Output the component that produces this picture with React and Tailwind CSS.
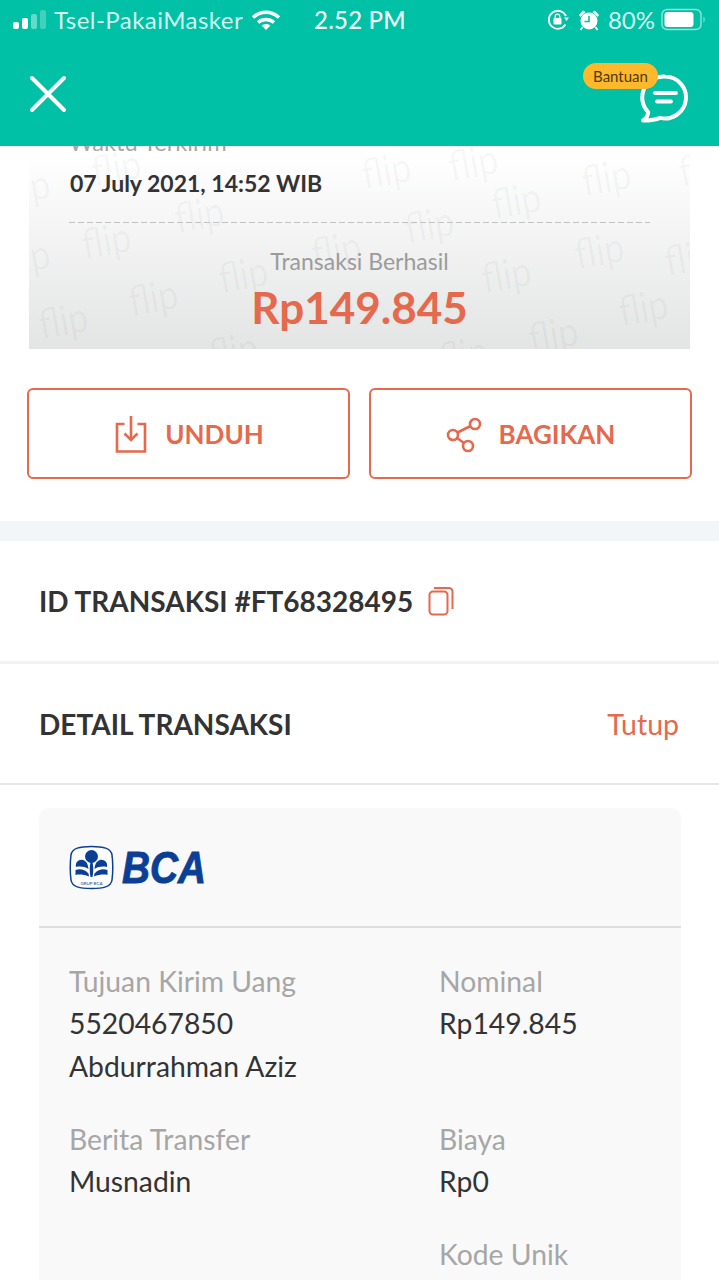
import React from 'react';

const ORANGE = '#e5694c';

// watermark placement, relative to the receipt card
const watermarks = [
  'left-[59px] top-[44px]',
  'left-[142px] top-[91px]',
  'left-[49px] top-[117px]',
  'left-[96px] top-[174px]',
  'left-[6px] top-[197px]',
  'left-[186px] top-[151px]',
  'left-[176px] top-[227px]',
  'left-[279px] top-[126px]',
  'left-[459px] top-[77px]',
  'left-[549px] top-[54px]',
  'left-[372px] top-[101px]',
  'left-[449px] top-[151px]',
  'left-[542px] top-[127px]',
  'left-[496px] top-[211px]',
  'left-[586px] top-[184px]',
  'left-[632px] top-[134px]',
  'left-[329px] top-[47px]',
  'left-[416px] top-[39px]',
  'left-[406px] top-[231px]',
  'left-[646px] top-[44px]',
  'left-[-32px] top-[64px]',
  'left-[-32px] top-[134px]',
];

const SignalBars = () => (
  <svg width="34" height="24" viewBox="0 0 34 24" className="block">
    <rect x="0" y="14" width="6" height="7" rx="2" fill="#ffffff" />
    <rect x="9" y="10" width="6" height="11" rx="2" fill="#ffffff" />
    <rect x="18" y="6" width="6" height="15" rx="2" fill="#ffffff" fillOpacity="0.4" />
    <rect x="27" y="2" width="6" height="19" rx="2" fill="#ffffff" fillOpacity="0.25" />
  </svg>
);

const Wifi = () => (
  <svg width="30" height="22" viewBox="0 0 30 22" fill="none" stroke="#ffffff" strokeWidth="3.6" className="block">
    <path d="M2 8.5C9.5 1.5 20.5 1.5 28 8.5" />
    <path d="M7 13.5C11.5 9.5 18.5 9.5 23 13.5" />
    <path d="M15 21l-4.4-4.6c2.5-2 6.3-2 8.8 0z" fill="#ffffff" stroke="none" />
  </svg>
);

const RotationLock = () => (
  <svg width="23" height="22" viewBox="0 0 23 22" fill="none" className="block">
    <path d="M18.5 15.5A9 9 0 1 1 19 7" stroke="#ffffff" strokeWidth="1.8" />
    <path d="M17 8.5h5l-2.5 3.5z" fill="#ffffff" />
    <rect x="6.5" y="9" width="8" height="6.5" rx="1" fill="#ffffff" />
    <path d="M8.2 9V7.5a2.3 2.3 0 0 1 4.6 0V9" stroke="#ffffff" strokeWidth="1.3" />
  </svg>
);

const Alarm = () => (
  <svg width="22" height="22" viewBox="0 0 22 22" className="block">
    <circle cx="11" cy="12" r="8.5" fill="#ffffff" />
    <path d="M11 7v5.5H6.5" fill="none" stroke="#00c1a6" strokeWidth="1.6" />
    <path d="M1 6l4-4.5 2.5 1.5L2.5 8zM21 6l-4-4.500-2.500 1.500L19.500 8z" fill="#ffffff" />
    <path d="M4.500 18l-2 3M17.500 18l2 3" stroke="#ffffff" strokeWidth="1.8" />
  </svg>
);

const Battery = () => (
  <svg width="45" height="24" viewBox="0 0 45 24" className="block">
    <rect x="1" y="1.500" width="39" height="20" rx="5" fill="none" stroke="#ffffff" strokeOpacity="0.55" strokeWidth="1.5" />
    <rect x="3.500" y="4" width="29" height="15" rx="3" fill="#ffffff" />
    <path d="M42.500 8.500c1.500.5 1.500 5.500 0 6z" fill="#ffffff" fillOpacity="0.6" />
  </svg>
);

const CloseIcon = () => (
  <svg width="38" height="38" viewBox="0 0 38 38" fill="none" stroke="#ffffff" strokeWidth="4" strokeLinecap="round" className="block">
    <path d="M3 3l32 32M35 3L3 35" />
  </svg>
);

const ChatIcon = () => (
  <svg width="50" height="52" viewBox="0 0 50 52" fill="none" stroke="#ffffff" strokeLinecap="round" className="block">
    <path
      d="M26 3.500a21 21 0 1 1-5 41.400c-3 1.500-8 2.600-17 2.600 3.500-2.400 5-5 5.200-8.400A21 21 0 0 1 26 3.500z"
      strokeWidth="4"
      strokeLinejoin="round"
    />
    <path d="M16 20h21M18 28.500h14" strokeWidth="3.800" />
  </svg>
);

const DownloadIcon = () => (
  <svg width="32" height="38" viewBox="0 0 32 38" fill="none" stroke={ORANGE} strokeWidth="2.600" className="block">
    <path d="M9.500 8H2v27.500h28V8h-7.500" />
    <path d="M16 0v24" />
    <path d="M9.500 17.500L16 24l6.500-6.500" />
  </svg>
);

const ShareIcon = () => (
  <svg width="36" height="36" viewBox="0 0 36 36" fill="none" stroke={ORANGE} strokeWidth="2.600" className="block">
    <circle cx="7" cy="18" r="5" />
    <circle cx="29" cy="7" r="5" />
    <circle cx="22" cy="29" r="5" />
    <path d="M11.500 15.500L24.500 9M11 21l7 5" />
  </svg>
);

const CopyIcon = () => (
  <svg width="26" height="30" viewBox="0 0 26 30" fill="none" stroke={ORANGE} strokeWidth="2" className="block">
    <rect x="1.500" y="5.500" width="18" height="23" rx="3.500" />
    <path d="M6 2h15a3.500 3.500 0 0 1 3.500 3.500V23" />
  </svg>
);

const BcaEmblem = () => (
  <svg width="45" height="45" viewBox="0 0 45 45" className="block">
    <path
      d="M22.500 1.500C34 1.500 42 3 43 10c1 8 1 17 0 25-1 7-9 8.500-20.500 8.500S3 42 2 35c-1-8-1-17 0-25C3 3 11 1.500 22.500 1.500z"
      fill="#ffffff"
      stroke="#0b3f96"
      strokeWidth="1.500"
    />
    <circle cx="22.500" cy="11.500" r="6.500" fill="#0b3f96" />
    <path d="M21.500 17c-1 5-1 10 0 15h2c1-5 1-10 0-15z" fill="#0b3f96" />
    <path d="M7 22c-1-5 3-8 7-7 3.500 1 5 4 5.500 9-4-2.500-8.500-3-12.500-2z" fill="#0b3f96" />
    <path d="M38 22c1-5-3-8-7-7-3.500 1-5 4-5.500 9 4-2.500 8.500-3 12.500-2z" fill="#0b3f96" />
    <path d="M6.500 25c4-1.500 9-1 13 3.500l.5 3c-5-2-10-2.500-13.500-1.500z" fill="#0b3f96" />
    <path d="M38.500 25c-4-1.500-9-1-13 3.500l-.5 3c5-2 10-2.500 13.500-1.500z" fill="#0b3f96" />
    <text x="22.500" y="39.500" textAnchor="middle" fontSize="4.500" fill="#0b3f96" fontFamily="Lato, sans-serif">GRUP BCA</text>
  </svg>
);

const Field = ({ label, lines }) => (
  <div>
    <div className="text-[28.300px] leading-[42px] text-[#a6a6a6]">{label}</div>
    {lines.map((line) => (
      <div key={line} className="text-[28.300px] leading-[42.500px] text-[#333333]">{line}</div>
    ))}
  </div>
);

export default function App() {
  return (
    <div className="h-[1280px] w-[719px] overflow-hidden bg-white font-['Lato',sans-serif]">
      {/* Top bar */}
      <header className="relative z-10 h-[146px] bg-[#00c1a6]">
        <div className="flex h-[40px] items-center pl-[13px] pr-[13px] text-[24px] text-[#d5f5ef]">
          <SignalBars />
          <span className="ml-[7px] tracking-[0.45px]">Tsel-PakaiMasker</span>
          <span className="ml-[8px]"><Wifi /></span>
          <span className="ml-[33px] font-medium text-[#f0fbf9] tracking-[0.2px]">2.52 PM</span>
          <div className="ml-auto flex items-center">
            <RotationLock />
            <span className="ml-[8px]"><Alarm /></span>
            <span className="ml-[8px]">80%</span>
            <span className="ml-[6px]"><Battery /></span>
          </div>
        </div>
        <div className="flex items-center justify-between pl-[29px] pr-[30px] pt-[23px]">
          <CloseIcon />
          <div className="relative mt-[10px]">
            <ChatIcon />
            <span className="absolute left-[-56px] top-[-10px] flex h-[26px] w-[75px] items-center justify-center rounded-full bg-[#fdb82b] text-[15px] text-[#50390a]">
              Bantuan
            </span>
          </div>
        </div>
      </header>

      {/* Receipt, scrolled partly under the top bar */}
      <section className="px-[29px]">
        <div className="relative -mt-[40px] h-[243px] overflow-hidden bg-gradient-to-b from-white from-[20%] to-[#e3e4e4] px-[40px] pt-[22px]">
          {watermarks.map((pos) => (
            <span
              key={pos}
              className={`absolute ${pos} origin-top-left -rotate-[10deg] scale-x-[0.85] text-[42px] leading-none text-black/[0.035] select-none`}
            >
              flip
            </span>
          ))}
          <div className="relative text-[23.700px] leading-[28px] text-[#a6a6a6]">Waktu Terkirim</div>
          <div className="relative mt-[11px] pl-[1px] text-[23px] font-bold leading-[32px] text-[#333333]">07 July 2021, 14:52 WIB</div>
          <div className="relative mt-[23px] h-px bg-[repeating-linear-gradient(to_right,#c2c2c2_0,#c2c2c2_6px,transparent_6px,transparent_9px)]" />
          <div className="relative mt-[24px] text-center text-[23px] leading-[28px] text-[#9b9b9b]">Transaksi Berhasil</div>
          <div className="relative mt-[7px] text-center text-[44px] font-bold leading-[50px] text-[#e5694c]">Rp149.845</div>
        </div>
      </section>

      {/* Actions */}
      <div className="grid grid-cols-2 gap-[19px] px-[27px] pt-[39px]">
        <button className="flex h-[91px] items-center justify-center gap-[18px] rounded-[6px] border-2 border-[#e5694c] pl-[2px] pt-[2px] text-[26px] font-bold text-[#e5694c]">
          <DownloadIcon />
          UNDUH
        </button>
        <button className="flex h-[91px] items-center justify-center gap-[17px] rounded-[6px] border-2 border-[#e5694c] pt-[2px] text-[26px] font-bold text-[#e5694c]">
          <ShareIcon />
          BAGIKAN
        </button>
      </div>

      <div className="mt-[42px] h-[20px] bg-[#f3f6f9]" />

      {/* Transaction id */}
      <div className="box-content flex h-[120px] items-center gap-[15px] border-b-[3px] border-[#f1f2f2] pl-[39px]">
        <span className="text-[28px] font-bold text-[#333333]">ID TRANSAKSI #FT68328495</span>
        <CopyIcon />
      </div>

      {/* Detail header */}
      <div className="box-content flex h-[119px] items-center justify-between border-b-2 border-[#e6e6e6] pl-[39px] pr-[40px]">
        <span className="text-[28px] font-bold text-[#333333]">DETAIL TRANSAKSI</span>
        <span className="pt-[2px] text-[28.500px] text-[#e5694c]">Tutup</span>
      </div>

      {/* Detail card */}
      <div className="ml-[39px] mr-[38px] mt-[23px] rounded-[10px] bg-[#f9f9f9] pb-[60px]">
        <div className="flex h-[120px] items-center gap-[8px] border-b-2 border-[#dedede] pl-[30px] pt-[1px]">
          <BcaEmblem />
          <span className="w-[84px] origin-left scale-x-[0.86] font-['Liberation_Sans',sans-serif] text-[45px] font-bold italic leading-none text-[#0b3f96] [-webkit-text-stroke:1px_#0b3f96]">
            BCA
          </span>
        </div>
        <div className="grid grid-cols-[370px_1fr] pl-[30px] pt-[32px]">
          <div className="flex flex-col gap-[31px]">
            <Field label="Tujuan Kirim Uang" lines={['5520467850', 'Abdurrahman Aziz']} />
            <Field label="Berita Transfer" lines={['Musnadin']} />
          </div>
          <div className="flex flex-col gap-[31px]">
            <div className="pb-[42px]">
              <Field label="Nominal" lines={['Rp149.845']} />
            </div>
            <Field label="Biaya" lines={['Rp0']} />
            <Field label="Kode Unik" lines={['Rp0']} />
          </div>
        </div>
      </div>
    </div>
  );
}
